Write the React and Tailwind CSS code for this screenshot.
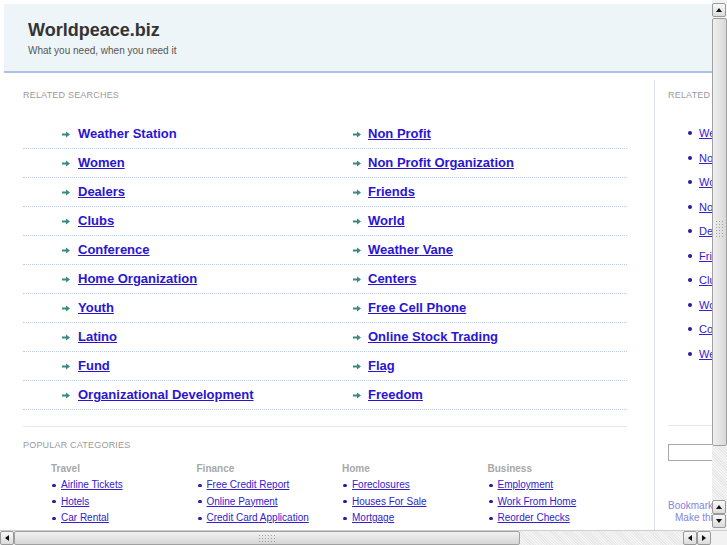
import React from 'react';

const relatedLeft = [
  'Weather Station',
  'Women',
  'Dealers',
  'Clubs',
  'Conference',
  'Home Organization',
  'Youth',
  'Latino',
  'Fund',
  'Organizational Development',
];

const relatedRight = [
  'Non Profit',
  'Non Profit Organization',
  'Friends',
  'World',
  'Weather Vane',
  'Centers',
  'Free Cell Phone',
  'Online Stock Trading',
  'Flag',
  'Freedom',
];

const sidebarLinks = [
  'Weather Station',
  'Non Profit',
  'Women',
  'Non Profit Organization',
  'Dealers',
  'Friends',
  'Clubs',
  'World',
  'Conference',
  'Weather Vane',
];

const categories = [
  { title: 'Travel', links: ['Airline Tickets', 'Hotels', 'Car Rental'] },
  { title: 'Finance', links: ['Free Credit Report', 'Online Payment', 'Credit Card Application'] },
  { title: 'Home', links: ['Foreclosures', 'Houses For Sale', 'Mortgage'] },
  { title: 'Business', links: ['Employment', 'Work From Home', 'Reorder Checks'] },
];

const Arrow = () => (
  <svg width="8" height="7" viewBox="0 0 8 7" className="shrink-0">
    <path d="M0 2.5h4V0.5l4 3-4 3V4.5H0z" fill="#3b8a80" />
  </svg>
);

const Grip = ({ vertical }) => (
  <div className={vertical ? 'grid grid-cols-3 gap-[2px]' : 'grid grid-cols-6 gap-[2px]'}>
    {Array.from({ length: 18 }).map((_, i) => (
      <span key={i} className="w-[1px] h-[1px] bg-[#a0a0a0]" />
    ))}
  </div>
);

const ScrollButton = ({ dir }) => {
  const paths = {
    up: 'M1 5l3-4 3 4z',
    down: 'M1 1l3 4 3-4z',
    left: 'M5 1l-4 3 4 3z',
    right: 'M1 1l4 3-4 3z',
  };
  const vertical = dir === 'up' || dir === 'down';
  return (
    <div className="w-[14px] h-[14px] flex items-center justify-center rounded-[2px] border border-[#9a9a9a] bg-gradient-to-b from-[#f8f8f8] to-[#dcdcdc]">
      <svg width={vertical ? 8 : 6} height={vertical ? 6 : 8} viewBox={vertical ? '0 0 8 6' : '0 0 6 8'}>
        <path d={paths[dir]} fill="#111" />
      </svg>
    </div>
  );
};

const Header = () => (
  <div className="h-[69px] bg-[#eef5f8] border-b-2 border-[#abc2e8] pl-[24px] pt-[15px]">
    <div className="text-[18px] font-bold text-[#333] leading-[22px]">Worldpeace.biz</div>
    <div className="text-[10px] text-[#555] leading-[12px] mt-[4px]">What you need, when you need it</div>
  </div>
);

const RelatedSearches = () => (
  <div>
    <div className="text-[9px] text-[#9a9a9a] leading-[11px] tracking-[0.2px]">RELATED SEARCHES</div>
    <div className="mt-[19px] w-[604px]">
      {relatedLeft.map((left, i) => (
        <div key={left} className="flex h-[29px] items-center border-b border-dotted border-[#b9cdea]">
          <div className="w-[292px] flex items-center gap-[8px] pl-[39px]">
            <Arrow />
            <a className={'text-[13px] font-bold text-[#2a14d4] ' + (i === 0 ? 'no-underline' : 'underline')}>
              {left}
            </a>
          </div>
          <div className="flex items-center gap-[7px] pl-[38px]">
            <Arrow />
            <a className="text-[13px] font-bold text-[#2a14d4] underline">{relatedRight[i]}</a>
          </div>
        </div>
      ))}
    </div>
  </div>
);

const PopularCategories = () => (
  <div className="w-[604px] border-t border-[#dfe8f4] mt-[16px] pt-[13px]">
    <div className="text-[9px] text-[#9a9a9a] leading-[11px] tracking-[0.2px]">POPULAR CATEGORIES</div>
    <div className="flex pl-[28px] mt-[12px]">
      {categories.map((cat) => (
        <div key={cat.title} className="w-[145.5px] shrink-0">
          <div className="text-[10px] font-bold text-[#a8a8a8] leading-[12px]">{cat.title}</div>
          <ul className="mt-[2px]">
            {cat.links.map((l) => (
              <li key={l} className="flex items-center h-[16.5px] pl-[1px]">
                <span className="w-[4px] h-[3px] rounded-full bg-[#2a1a9e]" />
                <a className="ml-[5px] text-[10px] text-[#3320d0] underline leading-[16px]">{l}</a>
              </li>
            ))}
          </ul>
        </div>
      ))}
    </div>
  </div>
);

const Sidebar = () => (
  <div className="w-[200px] pl-[13px] pt-[10px]">
    <div className="text-[9px] text-[#9a9a9a] leading-[11px] tracking-[0.2px]">RELATED SEARCHES</div>
    <ul className="mt-[20px] pl-[20px]">
      {sidebarLinks.map((l) => (
        <li key={l} className="flex items-center h-[24.5px]">
          <span className="w-[4px] h-[4px] rounded-full bg-[#2a1a9e]" />
          <a className="ml-[7px] text-[11px] text-[#3320d0] underline whitespace-nowrap">{l}</a>
        </li>
      ))}
    </ul>
    <div className="border-t border-[#dfe8f4] mt-[59px] pt-[18px]">
      <div className="h-[17px] w-[160px] border border-[#a8a8a8] bg-white" />
    </div>
    <div className="mt-[39px] text-[10px] leading-[12px] text-[#8585dc] whitespace-nowrap">
      <div>Bookmark this page</div>
      <div className="pl-[7px]">Make this your homepage</div>
    </div>
  </div>
);

const VerticalScrollbar = () => (
  <div className="w-[15px] shrink-0 flex flex-col bg-[#f2f2f2] pt-[3px] pb-[2px]">
    <ScrollButton dir="up" />
    <div className="h-[428px] mt-[1px] rounded-[2px] border border-[#a0a0a0] bg-gradient-to-r from-[#f0f0f0] to-[#d8d8d8] flex items-center justify-center">
      <div className="-mt-[6px]">
        <Grip vertical />
      </div>
    </div>
    <div className="flex-1 bg-[repeating-linear-gradient(45deg,#f4f4f4_0px,#f4f4f4_1px,#e8e8e8_1px,#e8e8e8_2px)]" />
    <ScrollButton dir="up" />
    <ScrollButton dir="down" />
  </div>
);

const HorizontalScrollbar = () => (
  <div className="h-[15px] shrink-0 flex bg-[#f2f2f2] border-t border-[#cfcfcf]">
    <ScrollButton dir="left" />
    <div className="w-[506px] rounded-[2px] border border-[#a0a0a0] bg-gradient-to-b from-[#f2f2f2] to-[#d6d6d6] flex items-center justify-center">
      <Grip />
    </div>
    <div className="w-[163px] bg-[repeating-linear-gradient(45deg,#f4f4f4_0px,#f4f4f4_1px,#e8e8e8_1px,#e8e8e8_2px)]" />
    <ScrollButton dir="left" />
    <ScrollButton dir="right" />
    <div className="flex-1 bg-[#f2f2f2]" />
  </div>
);

export default function App() {
  return (
    <div className="w-[727px] h-[545px] overflow-hidden flex flex-col bg-white font-['Liberation_Sans',Arial,sans-serif]">
      <div className="flex flex-1 min-h-0">
        <div className="flex-1 min-w-0 overflow-hidden">
          <div className="w-[900px] pt-[4px] pl-[4px]">
            <Header />
            <div className="flex mt-[7px]">
              <div className="w-[651px] shrink-0 border-r border-[#d6e0f0] pl-[19px] pt-[10px] pb-[40px]">
                <RelatedSearches />
                <PopularCategories />
              </div>
              <Sidebar />
            </div>
          </div>
        </div>
        <VerticalScrollbar />
      </div>
      <HorizontalScrollbar />
    </div>
  );
}
